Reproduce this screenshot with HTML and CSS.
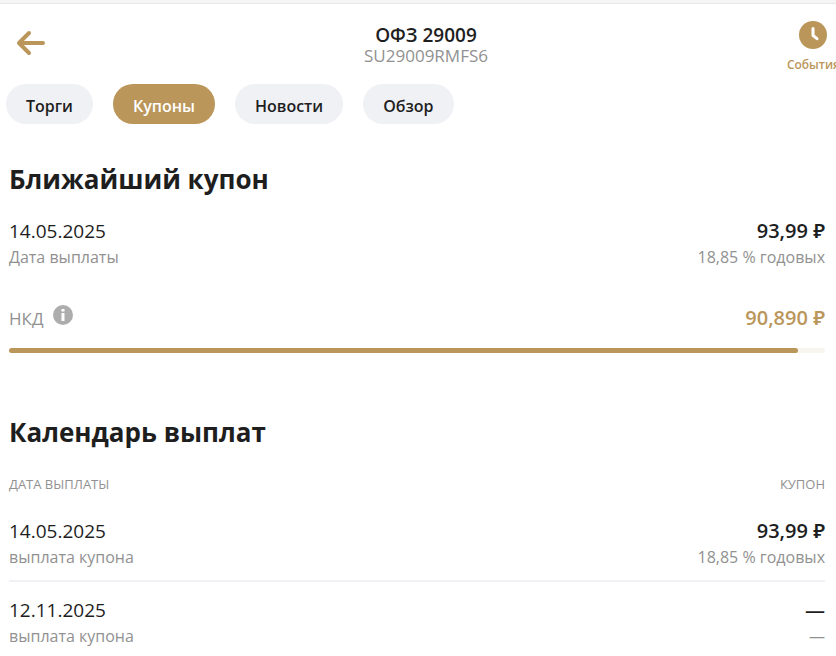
FILE: index.html
```html
<!DOCTYPE html>
<html lang="ru">
<head>
    <meta charset="UTF-8">
    <meta name="viewport" content="width=device-width, initial-scale=1.0">
    <title>ОФЗ 29009</title>
    <link rel="stylesheet" href="styles.css">
</head>
<body>
    <div class="page">
        <header class="header">
            <button class="back" aria-label="Назад">
                <svg width="30" height="26" viewBox="0 0 30 26" fill="none" stroke="currentColor" stroke-width="4" stroke-linecap="round" stroke-linejoin="round">
                    <path d="M28 13H4M14 3L4 13l10 10"/>
                </svg>
            </button>
            <div class="title">
                <h1>ОФЗ 29009</h1>
                <div class="code">SU29009RMFS6</div>
            </div>
            <button class="events">
                <svg width="28" height="28" viewBox="0 0 28 28">
                    <circle cx="14" cy="14" r="14" fill="currentColor"/>
                    <path d="M14 7.5v7l4 3.2" fill="none" stroke="#fff" stroke-width="3" stroke-linecap="round" stroke-linejoin="round"/>
                </svg>
                <span>События</span>
            </button>
        </header>

        <nav class="tabs">
            <button class="tab">Торги</button>
            <button class="tab active">Купоны</button>
            <button class="tab">Новости</button>
            <button class="tab">Обзор</button>
        </nav>

        <section class="section">
            <h2>Ближайший купон</h2>
            <div class="row">
                <div>
                    <div class="date">14.05.2025</div>
                    <div class="note">Дата выплаты</div>
                </div>
                <div class="right">
                    <div class="sum">93,99 ₽</div>
                    <div class="note">18,85 % годовых</div>
                </div>
            </div>
            <div class="row nkd">
                <div class="nkd-label">
                    <span class="note">НКД</span>
                    <svg width="20" height="20" viewBox="0 0 20 20">
                        <circle cx="10" cy="10" r="10" fill="#adadad"/>
                        <path d="M8.5 4h3v2.6h-3zM8.5 8h3v8h-3z" fill="#fff"/>
                    </svg>
                </div>
                <div class="sum gold">90,890 ₽</div>
            </div>
            <div class="bar"><div class="bar-fill" style="width: 96.7%"></div></div>
        </section>

        <section class="section">
            <h2>Календарь выплат</h2>
            <table class="calendar">
                <thead>
                    <tr>
                        <th>Дата выплаты</th>
                        <th class="right">Купон</th>
                    </tr>
                </thead>
                <tbody>
                    <tr>
                        <td>
                            <div class="date">14.05.2025</div>
                            <div class="note">выплата купона</div>
                        </td>
                        <td class="right">
                            <div class="sum">93,99 ₽</div>
                            <div class="note">18,85 % годовых</div>
                        </td>
                    </tr>
                    <tr>
                        <td>
                            <div class="date">12.11.2025</div>
                            <div class="note">выплата купона</div>
                        </td>
                        <td class="right">
                            <div class="sum">—</div>
                            <div class="note">—</div>
                        </td>
                    </tr>
                </tbody>
            </table>
        </section>
    </div>
</body>
</html>
```
FILE: styles.css
```css
* {
    box-sizing: border-box;
}
body {
    margin: 0;
    background-color: #fff;
    color: #1e1e1e;
    font-family: "Segoe UI", "Open Sans", "Noto Sans", sans-serif;
    font-size: 16px;
}
button {
    border: none;
    padding: 0;
    background: none;
    font-family: inherit;
    cursor: pointer;
}
h1, h2 {
    margin: 0;
}
.page {
    overflow: hidden;
    border-top: 3px solid #f5f5f5;
    box-shadow: inset 0 1px 0 #e8e8e8;
}
/* header runs a little past the right edge */
.header {
    display: grid;
    grid-template-columns: 1fr auto 1fr;
    margin-right: -16px;
    padding: 18px 12px 11px;
    align-items: start;
}
.back {
    justify-self: start;
    height: 44px;
    padding: 0 3px;
    color: #ba965a;
}
.back svg {
    display: block;
}
.title {
    padding-top: 2px;
    text-align: center;
}
h1 {
    font-size: 19px;
    line-height: 24px;
    font-weight: 600;
}
.code {
    color: #919191;
    font-size: 17px;
    line-height: 18px;
}
.events {
    display: flex;
    flex-direction: column;
    align-items: center;
    justify-self: end;
    gap: 8px;
    color: #ba965a;
    font-size: 12px;
    line-height: 16px;
    font-weight: 600;
}
.tabs {
    display: flex;
    gap: 20px;
    padding: 0 6px;
    margin-bottom: 35px;
}
.tab {
    height: 40px;
    padding: 3px 20px 0;
    border-radius: 20px;
    background-color: #f0f1f5;
    color: #1e1e1e;
    font-size: 16px;
    font-weight: 600;
}
.tab.active {
    background-color: #ba965a;
    color: #fff;
}
.section {
    padding: 0 11px 0 9px;
    margin-bottom: 59px;
}
.section:last-child {
    margin-bottom: 0;
}
h2 {
    font-size: 26px;
    line-height: 40px;
    font-weight: 700;
    margin-bottom: 19px;
}
.row {
    display: flex;
    justify-content: space-between;
}
.right {
    text-align: right;
}
.date {
    font-size: 19px;
    line-height: 26px;
}
.sum {
    font-size: 20px;
    line-height: 26px;
    font-weight: 600;
}
.gold {
    color: #ba965a;
}
.note {
    color: #919191;
    font-size: 16px;
    line-height: 26px;
}
.nkd {
    height: 26px;
    margin-top: 35px;
    margin-bottom: 17px;
}
.nkd-label {
    display: flex;
    gap: 9px;
}
.nkd-label .note {
    font-size: 17px;
    line-height: 28px;
}
.bar {
    height: 5px;
    border-radius: 3px;
    background-color: #f8f4ee;
}
.bar-fill {
    height: 100%;
    border-radius: 3px;
    background-color: #ba965a;
}
.calendar {
    width: 100%;
    border-collapse: collapse;
}
.calendar th {
    padding: 1px 0 7px;
    color: #919191;
    font-size: 13px;
    line-height: 24px;
    font-weight: 400;
    text-transform: uppercase;
    text-align: left;
}
.calendar th.right {
    text-align: right;
}
.calendar td {
    padding: 15px 0 10px;
}
.calendar tr:last-child td {
    padding-bottom: 5px;
}
.calendar tbody tr + tr {
    border-top: 2px solid #f0f1f5;
}
```
